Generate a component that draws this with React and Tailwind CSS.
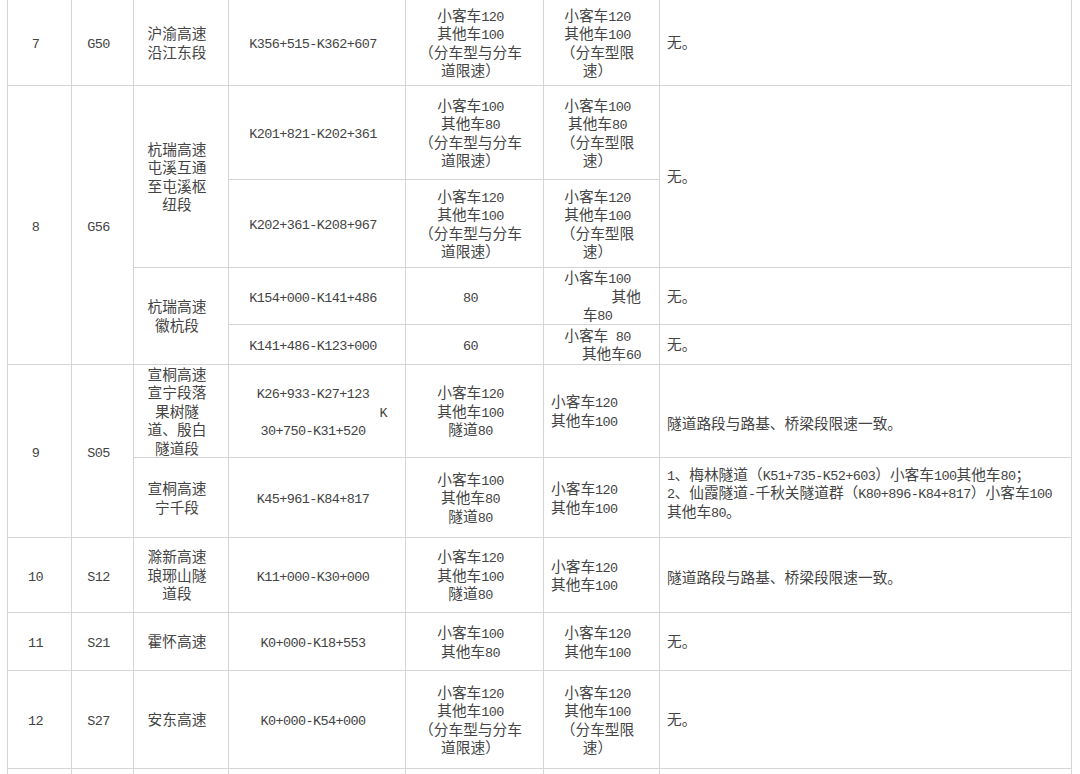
import React from "react";

const MONO = "font-['Liberation_Mono',monospace] text-[13.5px] tracking-[-0.6px] leading-none";

function T({ s }) {
  const parts = s.split(/([\x20-\x7E]+)/).filter((p) => p !== "");
  return parts.map((p, i) =>
    /^[\x20-\x7E]+$/.test(p) ? (
      <span key={i} className={MONO}>
        {p}
      </span>
    ) : (
      <React.Fragment key={i}>{p}</React.Fragment>
    )
  );
}

function Lines({ lines }) {
  return lines.map((l, i) => {
    const obj = typeof l === "string" ? { t: l } : l;
    const cls =
      obj.a === "r"
        ? "h-[18.5px] whitespace-pre text-right pr-[3px]"
        : obj.a === "l"
        ? "h-[18.5px] whitespace-pre text-left"
        : "h-[18.5px] whitespace-pre";
    return (
      <div key={i} className={cls}>
        <T s={obj.t} />
      </div>
    );
  });
}

const base = "border border-[#d4d4d4] py-0 align-middle";
const C = base + " pl-[7px] pr-[15px] text-center";
const L = base + " pl-[7px] pr-[7px] text-left";

function Cc({ lines, rowSpan }) {
  return (
    <td className={C} rowSpan={rowSpan}>
      <Lines lines={lines} />
    </td>
  );
}

function Cl({ lines, rowSpan, extra = "" }) {
  return (
    <td className={L + " " + extra} rowSpan={rowSpan}>
      <Lines lines={lines} />
    </td>
  );
}

const s120 = ["小客车120", "其他车100", "（分车型与分车", "道限速）"];
const s120b = ["小客车120", "其他车100", "（分车型限", "速）"];
const s100 = ["小客车100", "其他车80", "（分车型与分车", "道限速）"];
const s100b = ["小客车100", "其他车80", "（分车型限", "速）"];

export default function App() {
  return (
    <div className="h-[774px] w-[1080px] overflow-hidden bg-white">
      <table className="ml-[7px] -mt-[1px] w-[1064px] table-fixed border-collapse text-[14.7px] leading-[18.5px] text-[#444444] font-['Noto_Sans_CJK_SC',sans-serif]">
        <colgroup>
          <col className="w-[64px]" />
          <col className="w-[62px]" />
          <col className="w-[95px]" />
          <col className="w-[177px]" />
          <col className="w-[138px]" />
          <col className="w-[116px]" />
          <col className="w-[412px]" />
        </colgroup>
        <tbody>
          <tr className="h-[86px]">
            <Cc lines={["7"]} />
            <Cc lines={["G50"]} />
            <Cc lines={["沪渝高速", "沿江东段"]} />
            <Cc lines={["K356+515-K362+607"]} />
            <Cc lines={s120} />
            <Cc lines={s120b} />
            <Cl lines={["无。"]} />
          </tr>
          <tr className="h-[94px]">
            <Cc lines={["8"]} rowSpan={4} />
            <Cc lines={["G56"]} rowSpan={4} />
            <Cc lines={["杭瑞高速", "屯溪互通", "至屯溪枢", "纽段"]} rowSpan={2} />
            <Cc lines={["K201+821-K202+361"]} />
            <Cc lines={s100} />
            <Cc lines={s100b} />
            <Cl lines={["无。"]} rowSpan={2} />
          </tr>
          <tr className="h-[88px]">
            <Cc lines={["K202+361-K208+967"]} />
            <Cc lines={s120} />
            <Cc lines={s120b} />
          </tr>
          <tr className="h-[56px]">
            <Cc lines={["杭瑞高速", "徽杭段"]} rowSpan={2} />
            <Cc lines={["K154+000-K141+486"]} />
            <Cc lines={["80"]} />
            <Cc lines={["小客车100", { t: "其他", a: "r" }, "车80"]} />
            <Cl lines={["无。"]} />
          </tr>
          <tr className="h-[40px]">
            <Cc lines={["K141+486-K123+000"]} />
            <Cc lines={["60"]} />
            <Cc lines={["小客车 80", { t: "其他车60", a: "r" }]} />
            <Cl lines={["无。"]} />
          </tr>
          <tr className="h-[93px]">
            <Cc lines={["9"]} rowSpan={2} />
            <Cc lines={["S05"]} rowSpan={2} />
            <Cc lines={["宣桐高速", "宣宁段落", "果树隧", "道、殷白", "隧道段"]} />
            <Cc lines={["K26+933-K27+123", { t: "K", a: "r" }, "30+750-K31+520"]} />
            <Cc lines={["小客车120", "其他车100", "隧道80"]} />
            <Cl lines={["小客车120", "其他车100"]} />
            <Cl lines={["隧道路段与路基、桥梁段限速一致。"]} extra="pt-[24px]" />
          </tr>
          <tr className="h-[80px]">
            <Cc lines={["宣桐高速", "宁千段"]} />
            <Cc lines={["K45+961-K84+817"]} />
            <Cc lines={["小客车100", "其他车80", "隧道80"]} />
            <Cl lines={["小客车120", "其他车100"]} />
            <Cl
              lines={[
                "1、梅林隧道（K51+735-K52+603）小客车100其他车80；",
                "2、仙霞隧道-千秋关隧道群（K80+896-K84+817）小客车100",
                "其他车80。",
              ]}
              extra="pb-[10px]"
            />
          </tr>
          <tr className="h-[75px]">
            <Cc lines={["10"]} />
            <Cc lines={["S12"]} />
            <Cc lines={["滁新高速", "琅琊山隧", "道段"]} />
            <Cc lines={["K11+000-K30+000"]} />
            <Cc lines={["小客车120", "其他车100", "隧道80"]} />
            <Cl lines={["小客车120", "其他车100"]} />
            <Cl lines={["隧道路段与路基、桥梁段限速一致。"]} extra="pt-[5px]" />
          </tr>
          <tr className="h-[58px]">
            <Cc lines={["11"]} />
            <Cc lines={["S21"]} />
            <Cc lines={["霍怀高速"]} />
            <Cc lines={["K0+000-K18+553"]} />
            <Cc lines={["小客车100", "其他车80"]} />
            <Cc lines={["小客车120", "其他车100"]} />
            <Cl lines={["无。"]} />
          </tr>
          <tr className="h-[98px]">
            <Cc lines={["12"]} />
            <Cc lines={["S27"]} />
            <Cc lines={["安东高速"]} />
            <Cc lines={["K0+000-K54+000"]} />
            <Cc lines={s120} />
            <Cc lines={s120b} />
            <Cl lines={["无。"]} />
          </tr>
          <tr className="h-[40px]">
            <td className={C}></td>
            <td className={C}></td>
            <td className={C}></td>
            <td className={C}></td>
            <td className={C}></td>
            <td className={C}></td>
            <td className={L}></td>
          </tr>
        </tbody>
      </table>
    </div>
  );
}
